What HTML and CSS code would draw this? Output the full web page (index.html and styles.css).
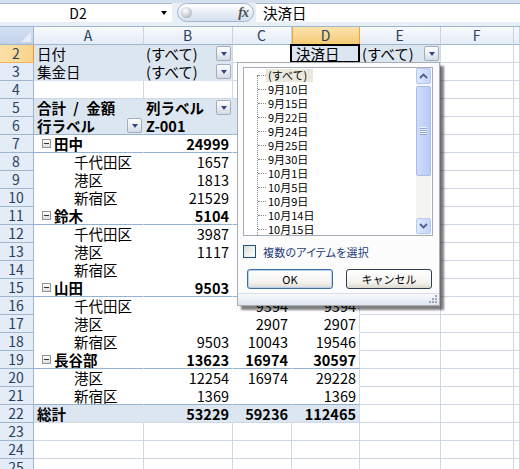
FILE: index.html
```html
<!DOCTYPE html>
<html lang="ja">
<head>
	<meta charset="utf-8">
	<title>ピボットテーブル - 決済日フィルター</title>
	<link rel="stylesheet" href="styles.css">
</head>
<body>

	<div class="formula-bar">
		<div class="name-box"><span class="name-text">D2</span><span class="name-arrow"></span></div>
		<div class="fx-button"><span class="knob"></span><i>fx</i></div>
		<div class="formula-input">決済日</div>
	</div>

	<div class="sheet">
		<div class="row">
			<div class="c corner"></div>
			<div class="c ch">A</div>
			<div class="c ch">B</div>
			<div class="c ch">C</div>
			<div class="c ch sel">D</div>
			<div class="c ch">E</div>
			<div class="c ch">F</div>
			<div class="c ch"></div>
		</div>
		<div class="row">
			<div class="c rh sel">2</div>
			<div class="c a pb">日付</div>
			<div class="c pb edge">(すべて)<span class="dd"></span></div>
			<div class="c"></div>
			<div class="c pb edge active">決済日</div>
			<div class="c pb edge">(すべて)<span class="dd"></span></div>
			<div class="c"></div>
			<div class="c"></div>
		</div>
		<div class="row">
			<div class="c rh">3</div>
			<div class="c a pb">集金日</div>
			<div class="c pb edge">(すべて)<span class="dd"></span></div>
			<div class="c"></div>
			<div class="c"></div>
			<div class="c"></div>
			<div class="c"></div>
			<div class="c"></div>
		</div>
		<div class="row">
			<div class="c rh">4</div>
			<div class="c"></div>
			<div class="c"></div>
			<div class="c"></div>
			<div class="c"></div>
			<div class="c"></div>
			<div class="c"></div>
			<div class="c"></div>
		</div>
		<div class="row">
			<div class="c rh">5</div>
			<div class="c a pb b wide">合計 / 金額</div>
			<div class="c pb b">列ラベル<span class="dd"></span></div>
			<div class="c pb"></div>
			<div class="c pb edge"></div>
			<div class="c"></div>
			<div class="c"></div>
			<div class="c"></div>
		</div>
		<div class="row">
			<div class="c rh">6</div>
			<div class="c a pb b line">行ラベル<span class="dd"></span></div>
			<div class="c pb b line">Z-001</div>
			<div class="c pb b line"></div>
			<div class="c pb b line edge"></div>
			<div class="c"></div>
			<div class="c"></div>
			<div class="c"></div>
		</div>
		<div class="row">
			<div class="c rh">7</div>
			<div class="c p b grp line"><span class="ex"></span>田中</div>
			<div class="c p b n line">24999</div>
			<div class="c p b n line"></div>
			<div class="c p b n line edge"></div>
			<div class="c"></div>
			<div class="c"></div>
			<div class="c"></div>
		</div>
		<div class="row">
			<div class="c rh">8</div>
			<div class="c p sub">千代田区</div>
			<div class="c p n">1657</div>
			<div class="c p n"></div>
			<div class="c p n edge"></div>
			<div class="c"></div>
			<div class="c"></div>
			<div class="c"></div>
		</div>
		<div class="row">
			<div class="c rh">9</div>
			<div class="c p sub">港区</div>
			<div class="c p n">1813</div>
			<div class="c p n"></div>
			<div class="c p n edge"></div>
			<div class="c"></div>
			<div class="c"></div>
			<div class="c"></div>
		</div>
		<div class="row">
			<div class="c rh">10</div>
			<div class="c p sub">新宿区</div>
			<div class="c p n">21529</div>
			<div class="c p n"></div>
			<div class="c p n edge"></div>
			<div class="c"></div>
			<div class="c"></div>
			<div class="c"></div>
		</div>
		<div class="row">
			<div class="c rh">11</div>
			<div class="c p b grp line"><span class="ex"></span>鈴木</div>
			<div class="c p b n line">5104</div>
			<div class="c p b n line"></div>
			<div class="c p b n line edge"></div>
			<div class="c"></div>
			<div class="c"></div>
			<div class="c"></div>
		</div>
		<div class="row">
			<div class="c rh">12</div>
			<div class="c p sub">千代田区</div>
			<div class="c p n">3987</div>
			<div class="c p n"></div>
			<div class="c p n edge"></div>
			<div class="c"></div>
			<div class="c"></div>
			<div class="c"></div>
		</div>
		<div class="row">
			<div class="c rh">13</div>
			<div class="c p sub">港区</div>
			<div class="c p n">1117</div>
			<div class="c p n"></div>
			<div class="c p n edge"></div>
			<div class="c"></div>
			<div class="c"></div>
			<div class="c"></div>
		</div>
		<div class="row">
			<div class="c rh">14</div>
			<div class="c p sub">新宿区</div>
			<div class="c p n"></div>
			<div class="c p n"></div>
			<div class="c p n edge"></div>
			<div class="c"></div>
			<div class="c"></div>
			<div class="c"></div>
		</div>
		<div class="row">
			<div class="c rh">15</div>
			<div class="c p b grp line"><span class="ex"></span>山田</div>
			<div class="c p b n line">9503</div>
			<div class="c p b n line"></div>
			<div class="c p b n line edge"></div>
			<div class="c"></div>
			<div class="c"></div>
			<div class="c"></div>
		</div>
		<div class="row">
			<div class="c rh">16</div>
			<div class="c p sub">千代田区</div>
			<div class="c p n"></div>
			<div class="c p n">9394</div>
			<div class="c p n edge">9394</div>
			<div class="c"></div>
			<div class="c"></div>
			<div class="c"></div>
		</div>
		<div class="row">
			<div class="c rh">17</div>
			<div class="c p sub">港区</div>
			<div class="c p n"></div>
			<div class="c p n">2907</div>
			<div class="c p n edge">2907</div>
			<div class="c"></div>
			<div class="c"></div>
			<div class="c"></div>
		</div>
		<div class="row">
			<div class="c rh">18</div>
			<div class="c p sub">新宿区</div>
			<div class="c p n">9503</div>
			<div class="c p n">10043</div>
			<div class="c p n edge">19546</div>
			<div class="c"></div>
			<div class="c"></div>
			<div class="c"></div>
		</div>
		<div class="row">
			<div class="c rh">19</div>
			<div class="c p b grp line"><span class="ex"></span>長谷部</div>
			<div class="c p b n line">13623</div>
			<div class="c p b n line">16974</div>
			<div class="c p b n line edge">30597</div>
			<div class="c"></div>
			<div class="c"></div>
			<div class="c"></div>
		</div>
		<div class="row">
			<div class="c rh">20</div>
			<div class="c p sub">港区</div>
			<div class="c p n">12254</div>
			<div class="c p n">16974</div>
			<div class="c p n edge">29228</div>
			<div class="c"></div>
			<div class="c"></div>
			<div class="c"></div>
		</div>
		<div class="row">
			<div class="c rh">21</div>
			<div class="c p sub line">新宿区</div>
			<div class="c p n line">1369</div>
			<div class="c p n line"></div>
			<div class="c p n line edge">1369</div>
			<div class="c"></div>
			<div class="c"></div>
			<div class="c"></div>
		</div>
		<div class="row">
			<div class="c rh">22</div>
			<div class="c a pb b total">総計</div>
			<div class="c pb b n total">53229</div>
			<div class="c pb b n total">59236</div>
			<div class="c pb b n total edge">112465</div>
			<div class="c"></div>
			<div class="c"></div>
			<div class="c"></div>
		</div>
		<div class="row">
			<div class="c rh">23</div>
			<div class="c"></div>
			<div class="c"></div>
			<div class="c"></div>
			<div class="c"></div>
			<div class="c"></div>
			<div class="c"></div>
			<div class="c"></div>
		</div>
		<div class="row">
			<div class="c rh">24</div>
			<div class="c"></div>
			<div class="c"></div>
			<div class="c"></div>
			<div class="c"></div>
			<div class="c"></div>
			<div class="c"></div>
			<div class="c"></div>
		</div>
		<div class="row">
			<div class="c rh">25</div>
			<div class="c"></div>
			<div class="c"></div>
			<div class="c"></div>
			<div class="c"></div>
			<div class="c"></div>
			<div class="c"></div>
			<div class="c"></div>
		</div>
	</div>

	<!-- filter dropdown for 決済日 -->
	<div class="popup">
		<div class="listbox">
			<ul class="tree">
				<li class="selected"><span>(すべて)</span></li>
				<li>9月10日</li>
				<li>9月15日</li>
				<li>9月22日</li>
				<li>9月24日</li>
				<li>9月25日</li>
				<li>9月30日</li>
				<li>10月1日</li>
				<li>10月5日</li>
				<li>10月9日</li>
				<li>10月14日</li>
				<li>10月15日</li>
			</ul>
			<div class="vscroll">
				<div class="sb-btn">
					<svg width="9" height="6" viewBox="0 0 9 6"><polyline points="1,5 4.5,1.5 8,5" fill="none" stroke="#4d6185" stroke-width="1.8"/></svg>
				</div>
				<div class="sb-track">
					<div class="sb-thumb">
						<svg width="7" height="8" viewBox="0 0 7 8">
							<rect x="0" y="0" width="7" height="1" fill="#eef3fe"/>
							<rect x="0" y="1" width="7" height="1" fill="#8fa6d6"/>
							<rect x="0" y="2" width="7" height="1" fill="#eef3fe"/>
							<rect x="0" y="3" width="7" height="1" fill="#8fa6d6"/>
							<rect x="0" y="4" width="7" height="1" fill="#eef3fe"/>
							<rect x="0" y="5" width="7" height="1" fill="#8fa6d6"/>
							<rect x="0" y="6" width="7" height="1" fill="#eef3fe"/>
							<rect x="0" y="7" width="7" height="1" fill="#8fa6d6"/>
						</svg>
					</div>
				</div>
				<div class="sb-btn">
					<svg width="9" height="6" viewBox="0 0 9 6"><polyline points="1,1 4.5,4.5 8,1" fill="none" stroke="#4d6185" stroke-width="1.8"/></svg>
				</div>
			</div>
		</div>

		<label class="multi"><span class="chk"></span>複数のアイテムを選択</label>

		<div class="buttons">
			<button type="button" class="btn ok">OK</button>
			<button type="button" class="btn">キャンセル</button>
		</div>

		<div class="grip-bar">
			<svg width="8" height="8" viewBox="0 0 8 8">
				<rect x="6" y="0" width="2" height="2" fill="#9aa5b5"/>
				<rect x="3" y="3" width="2" height="2" fill="#9aa5b5"/>
				<rect x="6" y="3" width="2" height="2" fill="#9aa5b5"/>
				<rect x="0" y="6" width="2" height="2" fill="#9aa5b5"/>
				<rect x="3" y="6" width="2" height="2" fill="#9aa5b5"/>
				<rect x="6" y="6" width="2" height="2" fill="#9aa5b5"/>
			</svg>
		</div>
	</div>

</body>
</html>
```

FILE: styles.css
```css
body {
	margin: 0;
	position: relative;
	width: 520px;
	height: 469px;
	overflow: hidden;
	background-color: #fff;
	font-family: "Noto Sans CJK JP", "Noto Sans", sans-serif;
	color: #000;
}

/* formula bar */
.formula-bar {
	display: flex;
	height: 27px;
	box-sizing: border-box;
	background: #e9eff7;
	border-top: 3px solid #d5e0ee;
	border-bottom: 1px solid #9eb6ce;
}
.name-box {
	display: flex;
	align-items: center;
	width: 172px;
	height: 19px;
	box-sizing: border-box;
	background: #fff;
	border-top: 1px solid #a8bbd3;
	font-size: 14px;
}
.name-text {
	flex: 1;
	text-align: center;
}
.name-arrow {
	width: 16px;
	display: flex;
	justify-content: center;
}
.name-arrow::after {
	content: "";
	border-left: 3.5px solid transparent;
	border-right: 3.5px solid transparent;
	border-top: 4px solid #000;
}
.fx-button {
	display: flex;
	align-items: center;
	justify-content: space-between;
	width: 77px;
	height: 19px;
	margin-left: 5px;
	padding: 0 5px 0 3px;
	box-sizing: border-box;
	border: 1px solid #a3b5cd;
	border-radius: 10px;
	background: linear-gradient(#ffffff, #e4ebf5 60%, #d4dfee);
}
.knob {
	width: 11px;
	height: 11px;
	border-radius: 50%;
	background: radial-gradient(circle at 40% 35%, #ffffff, #c9ced6 55%, #9097a3);
}
.fx-button i {
	font-family: "Liberation Serif", serif;
	font-weight: bold;
	font-size: 14px;
	color: #505050;
	letter-spacing: -1px;
}
.formula-input {
	flex: 1;
	height: 19px;
	margin-left: 2px;
	padding-left: 7px;
	box-sizing: border-box;
	background: #fff;
	border-top: 1px solid #a8bbd3;
	font-size: 14.5px;
	line-height: 18px;
}

/* grid */
.row {
	display: grid;
	grid-template-columns: 34px 110px 89px 59px 68px 81px 73px 1fr;
	height: 18px;
}
.c {
	display: flex;
	align-items: center;
	height: 18px;
	box-sizing: border-box;
	padding: 0 3px 0 2px;
	border-right: 1px solid #d0d7e5;
	border-bottom: 1px solid #d0d7e5;
	font-size: 14.5px;
	line-height: 17px;
	white-space: nowrap;
}
.a {
	padding-left: 3px;
}
.wide {
	word-spacing: 4px;
}
.corner {
	position: relative;
	background: linear-gradient(#d3e0f1, #c0d2ea);
	border-right-color: #9eb6ce;
	border-bottom-color: #9eb6ce;
}
.corner::after {
	content: "";
	position: absolute;
	right: 2px;
	bottom: 2px;
	border-left: 10px solid transparent;
	border-bottom: 10px solid #e6edf6;
}
.ch {
	justify-content: center;
	background: linear-gradient(#f8fafd, #e4ecf7);
	border-right-color: #c5d3e5;
	border-bottom-color: #9eb6ce;
	color: #27415f;
	font-size: 14px;
}
.ch.sel {
	background: linear-gradient(#fbe3ae, #f6cb74);
	border-right-color: #f2a33d;
	border-left: 1px solid #f2a33d;
	border-bottom-color: #f29536;
}
.rh {
	justify-content: center;
	background: #e4ecf7;
	border-right-color: #9eb6ce;
	border-bottom-color: #9eb6ce;
	color: #27415f;
	font-size: 14px;
}
.rh.sel {
	background: linear-gradient(90deg, #fbe0a6, #f8d48a);
	border-right-color: #f29536;
	border-bottom-color: #f2b35a;
}

/* pivot table */
.p {
	background: #fff;
	border-right-color: #fff;
	border-bottom-color: #fff;
}
.pb {
	background: #dce6f1;
	border-right-color: #dce6f1;
	border-bottom-color: #dce6f1;
}
.edge {
	border-right-color: #d0d7e5;
}
.line {
	border-bottom-color: #95b3d7;
}
.total {
	border-bottom-color: #d0d7e5;
}
.b {
	font-weight: bold;
}
.n {
	justify-content: flex-end;
	padding-right: 3px;
}
.sub {
	padding-left: 40px;
}
.grp {
	padding-left: 8px;
}
.ex {
	position: relative;
	width: 9px;
	height: 9px;
	margin-right: 3px;
	box-sizing: border-box;
	border: 1px solid #949494;
	background: linear-gradient(#ffffff, #dedede);
}
.ex::after {
	content: "";
	position: absolute;
	left: 1px;
	top: 3px;
	width: 5px;
	height: 1px;
	background: #333;
}
.dd {
	display: flex;
	align-items: center;
	justify-content: center;
	width: 15px;
	height: 15px;
	margin-left: auto;
	margin-right: -2px;
	box-sizing: border-box;
	border: 1px solid #a4adbb;
	border-radius: 2px;
	background: linear-gradient(#fdfdfd, #e9ecf1 55%, #d6dbe4);
}
.dd::after {
	content: "";
	margin-top: 1px;
	border-left: 3.5px solid transparent;
	border-right: 3.5px solid transparent;
	border-top: 4px solid #2f4a8a;
}
.active {
	position: relative;
	padding-left: 4px;
}
.active::after {
	content: "";
	position: absolute;
	left: -2px;
	top: -1px;
	right: -1px;
	bottom: -1px;
	border: 2px solid #000;
}

/* filter dropdown */
.popup {
	position: absolute;
	left: 237px;
	top: 62px;
	width: 203px;
	height: 244px;
	box-sizing: border-box;
	display: flex;
	flex-direction: column;
	border: 1px solid #a9adb3;
	background: #fcfcfc;
	box-shadow: 4px 4px 2px rgba(0, 0, 0, 0.5);
	font-size: 11px;
}
.listbox {
	display: flex;
	width: 190px;
	height: 169px;
	margin: 4px 0 0 5px;
	box-sizing: border-box;
	border: 1px solid #a5acb5;
	background: #fff;
}
.tree {
	position: relative;
	flex: 1;
	margin: 0;
	padding: 0;
	list-style: none;
	overflow: hidden;
}
.tree::before {
	content: "";
	position: absolute;
	left: 13px;
	top: 7px;
	bottom: 0;
	border-left: 1px dotted #8c8c8c;
}
.tree li {
	position: relative;
	height: 14px;
	padding-left: 24px;
	line-height: 14px;
	white-space: nowrap;
}
.tree li::before {
	content: "";
	position: absolute;
	left: 14px;
	top: 7px;
	width: 8px;
	border-top: 1px dotted #8c8c8c;
}
.tree .selected span {
	display: inline-block;
	height: 13px;
	margin-left: -2px;
	padding: 0 6px 0 2px;
	line-height: 13px;
	background: #ebe9de;
}
.vscroll {
	display: flex;
	flex-direction: column;
	width: 15px;
	margin-right: 1px;
	background: #f4f4f0;
}
.sb-btn {
	display: flex;
	align-items: center;
	justify-content: center;
	height: 16px;
	box-sizing: border-box;
	border: 1px solid #b7c9f2;
	border-radius: 2px;
	background: linear-gradient(90deg, #dfe8fe, #c5d5fc);
}
.sb-btn:last-child {
	margin-bottom: 1px;
}
.sb-track {
	flex: 1;
	padding-top: 2px;
}
.sb-thumb {
	display: flex;
	align-items: center;
	justify-content: center;
	height: 90px;
	box-sizing: border-box;
	border: 1px solid #aabde9;
	border-radius: 2px;
	background: linear-gradient(90deg, #cfdcfd, #b9cbf7);
}
.multi {
	display: flex;
	align-items: center;
	height: 13px;
	margin: 9px 0 0 5px;
	color: #1c3a78;
	font-feature-settings: "palt";
	letter-spacing: 0.2px;
}
.chk {
	width: 13px;
	height: 13px;
	margin-right: 7px;
	box-sizing: border-box;
	border: 1px solid #1c5180;
	background: linear-gradient(135deg, #dcdcd7, #ffffff);
}
.buttons {
	display: flex;
	gap: 13px;
	margin: 11px 0 0 9px;
}
.btn {
	width: 86px;
	height: 20px;
	padding: 0;
	border: 1px solid #2c3e50;
	border-radius: 3px;
	background: linear-gradient(#ffffff, #f3f2ee 70%, #dcd8ce);
	font-family: "Noto Sans CJK JP", sans-serif;
	font-size: 11px;
	color: #000;
}
.btn.ok {
	border-color: #3a6ea5;
	box-shadow: inset 0 0 0 1px #b9d1f0;
}
.grip-bar {
	display: flex;
	justify-content: flex-end;
	align-items: flex-end;
	height: 12px;
	margin-top: auto;
	padding: 0 2px 2px 0;
	box-sizing: border-box;
	border-top: 1px solid #d9dee6;
	background: linear-gradient(#f8f9fc, #dfe5ee);
}
```
